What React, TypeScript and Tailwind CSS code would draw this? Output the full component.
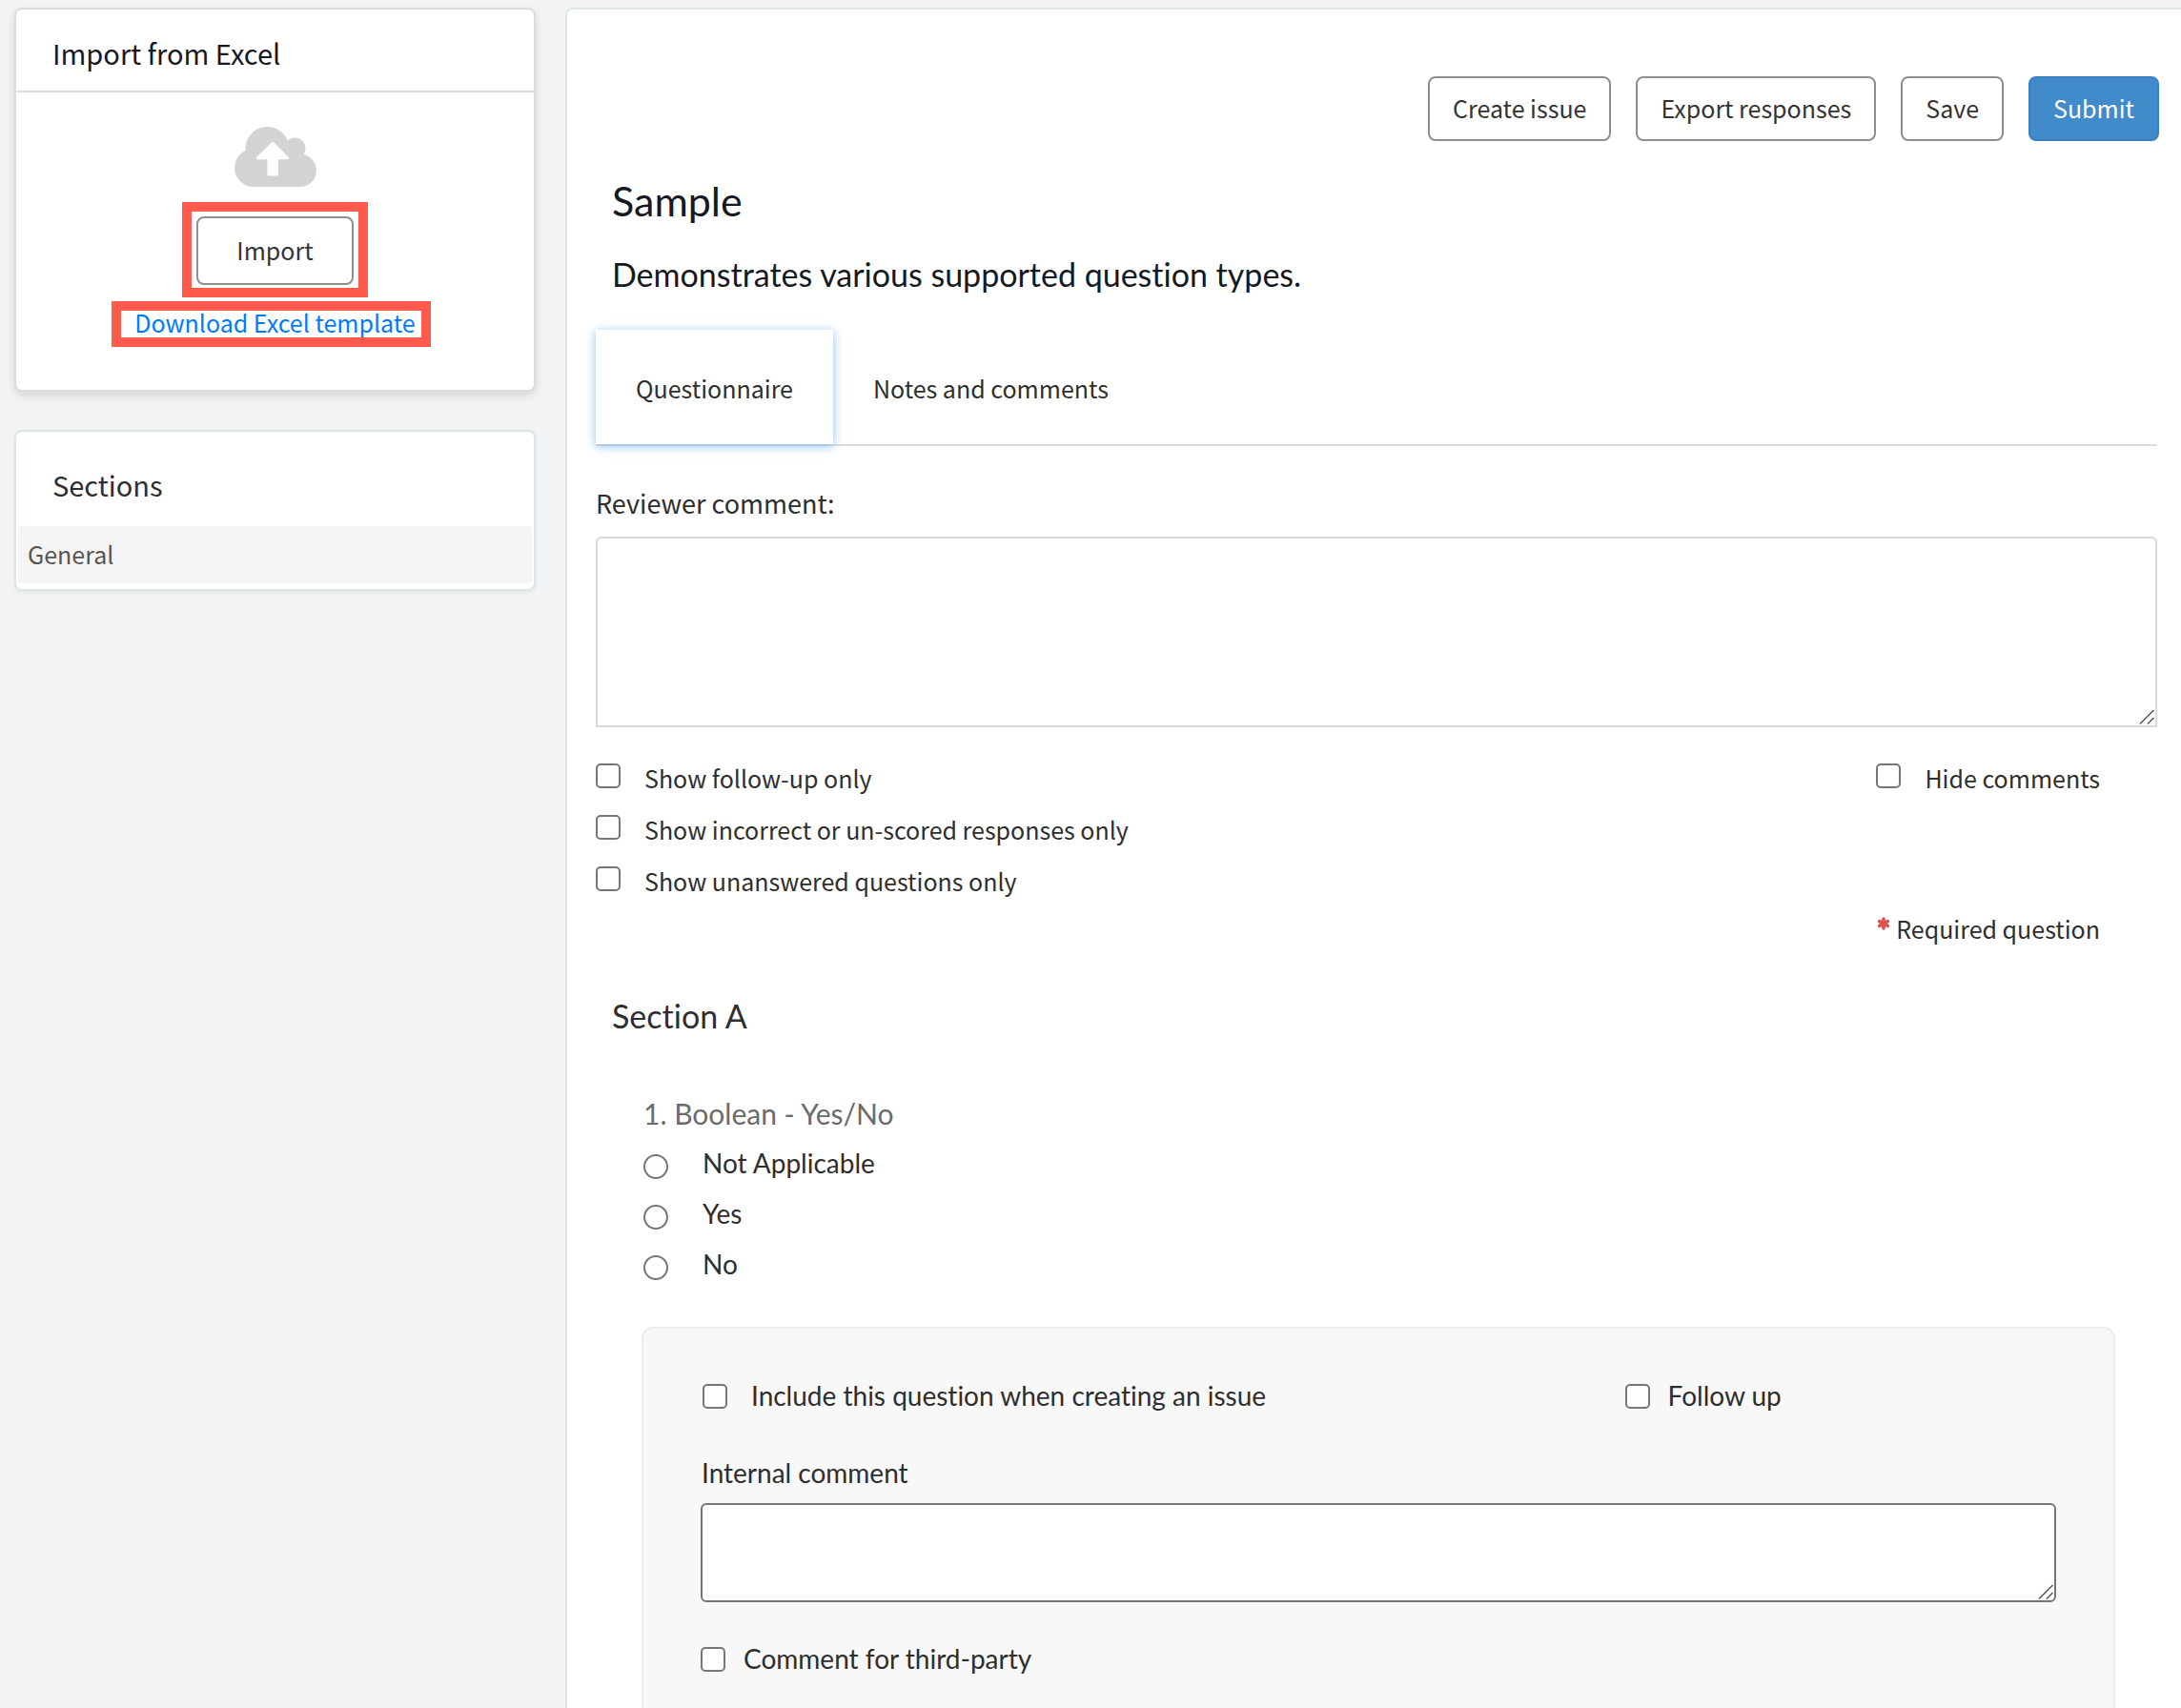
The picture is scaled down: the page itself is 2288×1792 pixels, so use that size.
import { useState } from "react";
import type { ReactNode } from "react";

function CloudUploadIcon() {
  return (
    <svg viewBox="-64 128 1920 1408" className="h-[63px] w-[86px] fill-[#d3d3d3]" aria-hidden="true">
      <path d="M1216 864q0-14-9-23l-352-352q-9-9-23-9t-23 9l-351 351q-10 12-10 24 0 14 9 23t23 9h224v352q0 13 9.5 22.5t22.5 9.5h192q13 0 22.5-9.5t9.5-22.5v-352h224q13 0 22.5-9.5t9.5-22.5zm640 288q0 159-112.5 271.5t-271.5 112.5h-1088q-185 0-316.5-131.5t-131.5-316.5q0-130 70-240t188-165q-2-30-2-43 0-212 150-362t362-150q156 0 285.5 87t188.5 231q71-62 166-62 106 0 181 75t75 181q0 76-41 138 130 31 213.5 135.5t83.5 238.5z" />
    </svg>
  );
}

function AsteriskIcon() {
  return (
    <svg viewBox="0 0 14 14" className="mb-2.5 size-3.5 stroke-[#d9534f]" strokeWidth="3.6" strokeLinecap="round" aria-hidden="true">
      <path d="M7 2v10M2.6 4.6l8.8 4.8M11.4 4.6l-8.8 4.8" />
    </svg>
  );
}

function ResizeGrip() {
  return (
    <svg viewBox="0 0 16 16" className="pointer-events-none absolute right-[3px] bottom-[3px] size-4 stroke-[#555]" strokeWidth="1.5" aria-hidden="true">
      <path d="M1 15.5L15.5 1M9 15.5L15.5 9" />
    </svg>
  );
}

function OutlineButton({ children }: { children: ReactNode }) {
  return (
    <button type="button" className="h-[68px] rounded-lg border-2 border-[#8f8f8f] bg-white px-6 text-[#333]">
      {children}
    </button>
  );
}

const boxClass =
  "size-[26px] shrink-0 appearance-none rounded-[5px] border-2 border-[#767676] bg-white checked:bg-[#428bca]";

function Check({ id, label, gap, raised }: { id: string; label: string; gap: string; raised?: boolean }) {
  return (
    <div className={`flex h-[54px] items-center ${gap}`}>
      <input id={id} type="checkbox" className={`${boxClass} ${raised ? "mb-1.5" : ""}`} />
      <label htmlFor={id} className={raised ? "" : "pb-0.5"}>
        {label}
      </label>
    </div>
  );
}

function ImportCard() {
  return (
    <section className="rounded-lg border-2 border-[#dcdddf] bg-white shadow-[0_4px_8px_rgba(0,0,0,0.12)]">
      <h2 className="border-b-2 border-[#dcdddf] px-[38px] pt-[25px] pb-5 text-[29px] leading-10 text-[#16191f]">
        Import from Excel
      </h2>
      <div className="flex flex-col items-center pt-9 pb-[51px]">
        <CloudUploadIcon />
        <div className="relative mt-[31px]">
          <button type="button" className="h-[72px] rounded-lg border-2 border-[#8f8f8f] bg-white px-10 text-[#333]">
            Import
          </button>
          <span className="pointer-events-none absolute -inset-x-[15px] -top-[15px] -bottom-[13px] border-10 border-[#ff5a4c]" />
        </div>
        <div className="relative mt-[19px]">
          <a href="#template" className="block leading-10 text-[#007bff]">
            Download Excel template
          </a>
          <span className="pointer-events-none absolute -top-0.5 -right-4 -bottom-1.5 -left-6 border-10 border-[#ff5a4c]" />
        </div>
      </div>
    </section>
  );
}

function SectionsCard() {
  return (
    <nav className="mt-10 rounded-lg border-2 border-[#dde5e7] bg-white pb-1.5 shadow-[0_2px_4px_rgba(0,0,0,0.06)]">
      <h2 className="px-[38px] pt-[35px] pb-6 text-[29px] leading-10 text-[#2e2e2e]">Sections</h2>
      <a href="#general" className="mx-0.5 block rounded bg-[#f4f4f4] px-2.5 pb-0.5 leading-[58px] text-[#555]">
        General
      </a>
    </nav>
  );
}

export default function App() {
  const [tab, setTab] = useState("questionnaire");
  const tabs = [
    { id: "questionnaire", label: "Questionnaire" },
    { id: "notes", label: "Notes and comments" },
  ];

  return (
    <div className="flex min-h-screen gap-[31px] bg-[#f1f3f5] pt-2 pl-[15px] font-['Noto_Sans_CJK_SC','Noto_Sans',sans-serif] text-[25px] text-[#2e2e2e] [font-variant-ligatures:none]">
      <aside className="w-[547px] shrink-0">
        <ImportCard />
        <SectionsCard />
      </aside>

      <main className="flex min-w-0 flex-1 flex-col rounded-tl-lg border-t-2 border-l-2 border-[#dde5e7] bg-white pt-[70px] pr-[25px] pl-[30px]">
        <div className="-mr-0.5 flex justify-end gap-[26px]">
          <OutlineButton>Create issue</OutlineButton>
          <OutlineButton>Export responses</OutlineButton>
          <OutlineButton>Save</OutlineButton>
          <button type="button" className="h-[68px] rounded-lg border-2 border-[#3a80c1] bg-[#428bca] px-6 text-white">
            Submit
          </button>
        </div>

        <header className="px-[17px] font-['Lato',sans-serif] text-[#16191f]">
          <h1 className="mt-[35px] text-[43px] leading-14">Sample</h1>
          <p className="mt-[25px] text-[34px] leading-12">Demonstrates various supported question types.</p>
        </header>

        <div role="tablist" className="mt-[34px] flex border-b-2 border-[#dcdcdc]">
          {tabs.map((t) => (
            <button
              key={t.id}
              type="button"
              role="tab"
              aria-selected={tab === t.id}
              onClick={() => setTab(t.id)}
              className={`h-30 px-[42px] pt-1 ${tab === t.id ? "shadow-[0_2px_10px_rgba(102,175,233,0.75)]" : ""}`}
            >
              {t.label}
            </button>
          ))}
        </div>

        <label htmlFor="reviewer" className="mt-10 text-[27px] leading-10">
          Reviewer comment:
        </label>
        <div className="relative mt-[15px] flex">
          <textarea id="reviewer" className="h-[200px] w-full resize-none rounded-t-md border-2 border-[#d9d9d9] bg-white p-3" />
          <ResizeGrip />
        </div>

        <div className="mt-[27px] flex justify-between pr-[60px]">
          <div>
            <Check id="followup-only" label="Show follow-up only" gap="gap-[25px]" raised />
            <Check id="incorrect-only" label="Show incorrect or un-scored responses only" gap="gap-[25px]" raised />
            <Check id="unanswered-only" label="Show unanswered questions only" gap="gap-[25px]" raised />
          </div>
          <Check id="hide-comments" label="Hide comments" gap="gap-[25px]" raised />
        </div>
        <p className="mt-0.5 flex items-center justify-end gap-1.5 pr-[60px] leading-10">
          <AsteriskIcon />
          Required question
        </p>

        <h2 className="mt-12 px-[17px] font-['Lato',sans-serif] text-[34px] leading-12">Section A</h2>

        <fieldset className="mt-[58px] px-[50px] font-['Lato',sans-serif] text-[28px]">
          <legend className="mb-[5px] text-[30px] leading-10 text-[#6b6b6b]">1. Boolean - Yes/No</legend>
          {["Not Applicable", "Yes", "No"].map((option) => (
            <label key={option} className="flex h-[53px] items-center gap-9">
              <input
                type="radio"
                name="boolean"
                className="mt-2 size-[26px] appearance-none rounded-full border-2 border-[#767676] bg-white checked:border-8"
              />
              {option}
            </label>
          ))}
        </fieldset>

        <div className="mt-10 mr-11 ml-12 flex-1 rounded-t-xl border-2 border-b-0 border-[#ececec] bg-[#f8f8f8] px-[60px] pt-11 font-['Lato',sans-serif] text-[28px]">
          <div className="grid grid-cols-[15fr_7fr]">
            <div className="pl-0.5">
              <Check id="include" label="Include this question when creating an issue" gap="gap-[25px]" />
            </div>
            <Check id="follow-up" label="Follow up" gap="gap-[19px]" />
          </div>
          <label htmlFor="internal" className="mt-[33px] block pl-px leading-10">
            Internal comment
          </label>
          <div className="relative mt-3 mb-[33px] flex">
            <textarea id="internal" className="h-[104px] w-full resize-none rounded-md border-2 border-[#767676] bg-white p-3" />
            <ResizeGrip />
          </div>
          <Check id="third-party" label="Comment for third-party" gap="gap-[19px]" />
        </div>
      </main>
    </div>
  );
}
